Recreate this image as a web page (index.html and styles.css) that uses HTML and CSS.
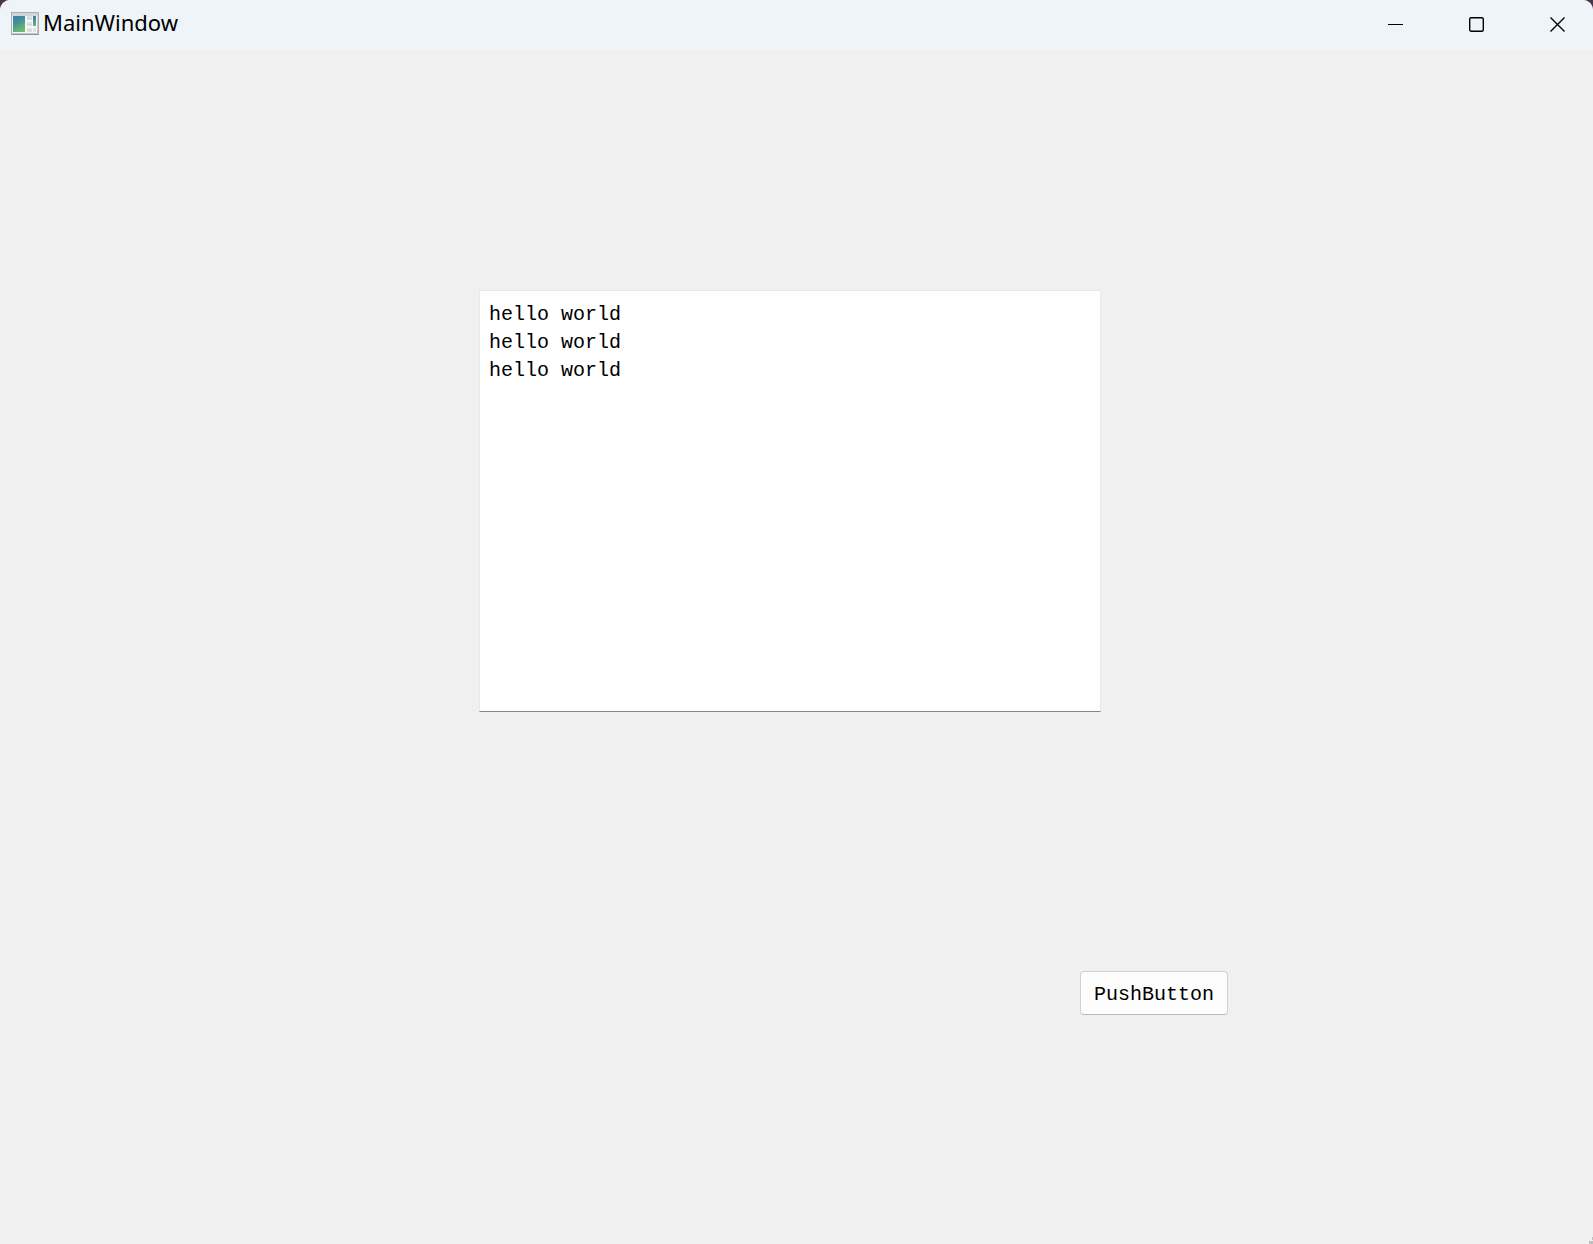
FILE: index.html
```html
<!DOCTYPE html>
<html lang="en">
<head>
    <meta charset="UTF-8">
    <meta name="viewport" content="width=device-width, initial-scale=1.0">
    <title>MainWindow</title>
    <link rel="stylesheet" href="styles.css">
</head>
<body>
    <div class="window">
        <header class="titlebar">
            <svg class="app-icon" width="28" height="24" viewBox="0 0 28 24" aria-hidden="true">
                <defs>
                    <linearGradient id="pane" x1="0" y1="0" x2="0.4" y2="1">
                        <stop offset="0" stop-color="#3f78a8"/>
                        <stop offset="0.5" stop-color="#459495"/>
                        <stop offset="1" stop-color="#6cba6e"/>
                    </linearGradient>
                    <linearGradient id="strip" x1="0" y1="0" x2="0" y2="1">
                        <stop offset="0" stop-color="#3f74a4"/>
                        <stop offset="1" stop-color="#6cb681"/>
                    </linearGradient>
                    <linearGradient id="frame" x1="0" y1="0" x2="0" y2="1">
                        <stop offset="0" stop-color="#d3d6da"/>
                        <stop offset="1" stop-color="#c3c5c9"/>
                    </linearGradient>
                </defs>
                <rect x="0.5" y="0.5" width="27" height="22" fill="url(#frame)" stroke="#a9aeb4"/>
                <path d="M1 22.5h27" stroke="#8f9398"/>
                <rect x="1" y="4" width="25" height="17" fill="#f5f6f7"/>
                <rect x="2" y="4" width="12" height="16" fill="url(#pane)"/>
                <path d="M16 4h5v4h-5zM16 10h5v4h-5zM16 16h5v4h-5zM22 16h3v4h-3z" fill="#dfe1e4"/>
                <path d="M16 6.500h5M16 12.500h5M16 18.500h5" stroke="#d0d2d5"/>
                <rect x="22" y="4" width="3" height="10" fill="url(#strip)"/>
            </svg>
            <h1 class="title">MainWindow</h1>
            <div class="controls">
                <button class="control" type="button" aria-label="Minimize">
                    <svg width="16" height="16" viewBox="0 0 16 16"><path d="M0 8.500h15"/></svg>
                </button>
                <button class="control" type="button" aria-label="Maximize">
                    <svg class="bold" width="16" height="16" viewBox="0 0 16 16"><rect x="0.7" y="1.7" width="13.6" height="13.6" rx="1.5"/></svg>
                </button>
                <button class="control" type="button" aria-label="Close">
                    <svg class="bold" width="16" height="16" viewBox="0 0 16 16"><path d="M0.5 1.5l14 14M14.5 1.5l-14 14"/></svg>
                </button>
            </div>
        </header>

        <main class="central">
            <textarea class="text-edit" aria-label="Text" spellcheck="false">hello world
hello world
hello world</textarea>
            <button class="push-button" type="button">PushButton</button>
            <svg class="size-grip" width="5" height="7" viewBox="0 0 5 7" aria-hidden="true">
                <path d="M1 4h3v3H1zM4 0h1v3H4zM4 4h1v3H4z"/>
            </svg>
        </main>
    </div>
</body>
</html>
```
FILE: styles.css
```css
* {
    box-sizing: border-box;
}

body {
    margin: 0;
    background: #4a3550;
}

.window {
    display: flex;
    flex-direction: column;
    height: 100vh;
    border-radius: 10px 10px 0 0;
    overflow: hidden;
    background: #f0f0f0;
}

/* title bar */
.titlebar {
    display: flex;
    align-items: center;
    height: 50px;
    padding-left: 11px;
    background: #eff4f9;
}

.app-icon {
    margin-right: 4px;
    margin-bottom: 2px;
}

.title {
    margin: 0 0 6px;
    font: 400 22px/30px "Noto Sans", sans-serif;
    color: #000;
}

.controls {
    display: flex;
    align-self: stretch;
    gap: 11px;
    margin-left: auto;
}

.control {
    display: flex;
    align-items: center;
    justify-content: center;
    width: 70px;
    padding: 0 0 2px;
    border: 0;
    background: none;
}

.control svg {
    fill: none;
    stroke: #000;
}

.control .bold {
    stroke-width: 1.4;
}

/* form area */
.central {
    position: relative;
    flex: 1;
    display: grid;
    grid-template-columns: 479fr 601fr 21fr 127fr 365fr;
    grid-template-rows: 240fr 422fr 259fr 44fr 229fr;
}

.text-edit {
    grid-column: 2 / 4;
    grid-row: 2;
    margin: 0;
    padding: 10px 9px;
    border: 1px solid #e8e8e8;
    border-bottom-color: #868686;
    outline: 0;
    resize: none;
    background: #fff;
    color: #000;
    font: 20px/28px "Liberation Mono", monospace;
}

.push-button {
    grid-column: 3 / 5;
    grid-row: 4;
    padding: 4px 0 0;
    border: 1px solid #d0d0d0;
    border-bottom-color: #bababa;
    border-radius: 4px;
    background: #fdfdfd;
    color: #000;
    font: 20px/28px "Liberation Mono", monospace;
}

.size-grip {
    position: absolute;
    right: 0;
    bottom: 0;
    fill: #bfbfbf;
}
```
